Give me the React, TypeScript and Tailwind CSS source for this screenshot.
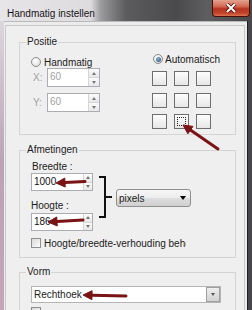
import React from 'react';

const Radio: React.FC<{ checked?: boolean }> = ({ checked }) => (
  <span className="flex h-[10px] w-[10px] shrink-0 items-center justify-center rounded-full border border-[#8a8c8e] bg-[radial-gradient(circle_at_40%_35%,#ffffff,#d6d7d8)]">
    {checked && <span className="h-[5px] w-[5px] rounded-full bg-[radial-gradient(circle_at_40%_35%,#8fb2d0,#1f4a70)]" />}
  </span>
);

const Check: React.FC = () => (
  <span className="h-[10px] w-[10px] shrink-0 border border-[#8e8f8f] bg-[linear-gradient(135deg,#d8d8d8,#fdfdfd)]" />
);

const Spin: React.FC<{ className: string }> = ({ className }) => (
  <div className={`flex flex-col border-l border-[#d6d6d6] ${className}`}>
    <div className="flex flex-1 items-center justify-center border-b border-[#d6d6d6] bg-[linear-gradient(#fbfbfb,#e8e8e8)]">
      <span className="h-0 w-0 border-x-[2px] border-b-[3px] border-x-transparent border-b-[#777]" />
    </div>
    <div className="flex flex-1 items-center justify-center bg-[linear-gradient(#fbfbfb,#e8e8e8)]">
      <span className="h-0 w-0 border-x-[2px] border-t-[3px] border-x-transparent border-t-[#777]" />
    </div>
  </div>
);

const Field: React.FC<{ value: string; disabled?: boolean; className: string; spin: string }> = ({
  value,
  disabled,
  className,
  spin,
}) => (
  <div className={`flex border border-[#abadb3] bg-white ${className}`}>
    <span className={`flex-1 pl-[2px] leading-[16px] ${disabled ? 'text-[#a2a2a2]' : 'text-[#111]'}`}>{value}</span>
    <Spin className={spin} />
  </div>
);

const Cell: React.FC<{ sel?: boolean }> = ({ sel }) => (
  <div className="flex h-[15px] w-[15px] border border-[#6e6e6e] bg-[linear-gradient(#fdfdfd,#e6e6e6)] p-[2px]">
    {sel && <div className="flex-1 border border-dotted border-[#222]" />}
  </div>
);

// annotation arrows: tail x/y, tip x/y
const arrows = [
  [218, 149, 183, 125],
  [85, 181.5, 56, 183],
  [83, 220, 48, 222],
  [126, 296, 83, 295],
];

const Arrow: React.FC<{ a: number[] }> = ({ a }) => {
  const [x1, y1, x2, y2] = a;
  const dx = x2 - x1;
  const dy = y2 - y1;
  const l = Math.hypot(dx, dy);
  const ux = dx / l;
  const uy = dy / l;
  const bx = x2 - ux * 9;
  const by = y2 - uy * 9;
  return (
    <g fill="#7a1414" stroke="#7a1414">
      <line x1={x1} y1={y1} x2={bx} y2={by} strokeWidth="3" strokeLinecap="round" />
      <polygon
        points={`${x2},${y2} ${bx - uy * 4.5},${by + ux * 4.5} ${bx + uy * 4.5},${by - ux * 4.5}`}
        strokeWidth="1"
        strokeLinejoin="round"
      />
    </g>
  );
};

export default function App() {
  return (
    <div className="relative flex h-[310px] w-[252px] flex-col overflow-hidden bg-[#ececec] font-['Liberation_Sans',Arial,sans-serif] text-[10px] text-[#1b1b1b]">
      {/* title bar */}
      <div className="flex h-[21px] shrink-0 justify-between bg-[linear-gradient(90deg,#e8e5e9_0%,#dedbdf_36%,#9b9a9c_40%,#5c5c5e_50%,#4a4a4c_70%,#5e5e60_82%,#48484a_100%)]">
        <span className="pl-[7px] pt-[8px] leading-[12px] text-[#151515]">Handmatig instellen</span>
        <div className="mr-[2px] flex h-[17px] w-[38px] items-center justify-center rounded-b-[4px] border border-t-0 border-[#4a1008] bg-[linear-gradient(#e4a391_0%,#d2654e_42%,#b5331f_55%,#c0432a_82%,#dc7350_100%)]">
          <svg width="12" height="10" viewBox="0 0 12 10">
            <path d="M2 1L10 9M10 1L2 9" stroke="#4a0e06" strokeWidth="3.6" />
            <path d="M2 1L10 9M10 1L2 9" stroke="#fff" strokeWidth="2" />
          </svg>
        </div>
      </div>

      <div className="flex flex-1">
        <div className="w-[4px] bg-[linear-gradient(#dcd7dd,#bba3b5_45%,#c6a6b7)]" />
        <div className="flex-1 border-t border-[#b9b9b9] pl-[1px] pr-[2px] pt-[3px]">
          <div className="h-full border border-b-0 border-[#c9c9c9] bg-[#efefef] pl-[13px] pr-[8px]">
            {/* Positie */}
            <fieldset className="mt-[10px] h-[99px] border border-[#d4d4d4]">
              <legend className="ml-[6px] px-[1px] leading-[12px]">Positie</legend>
              <div className="flex pl-[11px]">
                <div className="flex flex-col">
                  <label className="mt-[8px] flex h-[12px] items-center gap-[3px]">
                    <Radio />
                    Handmatig
                  </label>
                  <div className="flex h-[19px] items-center">
                    <span className="w-[16px] pl-[2px] text-[#a2a2a2]">X:</span>
                    <Field value="60" disabled className="h-[19px] w-[53px]" spin="w-[11px]" />
                  </div>
                  <div className="mt-[6px] flex h-[19px] items-center">
                    <span className="w-[16px] pl-[2px] text-[#a2a2a2]">Y:</span>
                    <Field value="60" disabled className="h-[19px] w-[53px]" spin="w-[11px]" />
                  </div>
                </div>
                <div className="ml-[52px] flex flex-col">
                  <label className="mt-[5px] flex h-[12px] items-center gap-[2px] pl-[1px]">
                    <Radio checked />
                    Automatisch
                  </label>
                  <div className="mt-[6px] grid grid-cols-[15px_15px_15px] gap-x-[7px] gap-y-[6.5px]">
                    <Cell />
                    <Cell />
                    <Cell />
                    <Cell />
                    <Cell />
                    <Cell />
                    <Cell />
                    <Cell sel />
                    <Cell />
                  </div>
                </div>
              </div>
            </fieldset>

            {/* Afmetingen */}
            <fieldset className="mt-[9px] h-[114px] border border-[#d4d4d4]">
              <legend className="ml-[6px] px-[1px] leading-[12px]">Afmetingen</legend>
              <div className="flex pl-[11px]">
                <div className="flex w-[62px] flex-col">
                  <span className="mt-[5px] pl-[1px] leading-[12px]">Breedte :</span>
                  <Field value="1000" className="h-[18px] w-[62px]" spin="w-[9px]" />
                  <span className="mt-[9px] leading-[12px]">Hoogte :</span>
                  <Field value="186" className="mt-[1px] h-[18px] w-[62px]" spin="w-[9px]" />
                </div>
                <svg width="23" height="44" className="mt-[19px] shrink-0">
                  <path d="M6 2H12V42H6M12 22H19" fill="none" stroke="#111" strokeWidth="2" />
                </svg>
                <div className="mt-[33px] flex h-[18px] w-[75px] items-center justify-between rounded-[3px] border border-[#8e8f8f] bg-[linear-gradient(#f6f6f6_0%,#ececec_50%,#dedede_51%,#d0d0d0_100%)] pl-[2px] pr-[4px]">
                  <span>pixels</span>
                  <span className="h-0 w-0 border-x-[3px] border-t-[4px] border-x-transparent border-t-black" />
                </div>
              </div>
              <label className="ml-[11px] mt-[6px] flex h-[12px] items-center gap-[3px]">
                <Check />
                <span className="w-[142px] overflow-hidden whitespace-nowrap">Hoogte/breedte-verhouding behouden</span>
              </label>
            </fieldset>

            {/* Vorm */}
            <fieldset className="mt-[8px] h-[70px] border border-[#d4d4d4]">
              <legend className="ml-[6px] px-[1px] leading-[12px]">Vorm</legend>
              <div className="ml-[11px] mt-[8px] flex h-[17px] w-[190px] border border-[#b5b5b5] bg-white">
                <span className="flex-1 pl-[2px] leading-[15px]">Rechthoek</span>
                <div className="flex w-[14px] items-center justify-center border border-[#a0a0a0] bg-[linear-gradient(#eeeeee,#d2d2d2)]">
                  <span className="h-0 w-0 border-x-[2px] border-t-[3px] border-x-transparent border-t-[#555]" />
                </div>
              </div>
              <div className="ml-[11px] mt-[4px] flex">
                <Check />
              </div>
            </fieldset>
          </div>
        </div>
        <div className="w-[5px] border-l border-[#1e1e1e] bg-[#46464c]" />
      </div>

      <svg className="pointer-events-none absolute inset-0" width="252" height="310" viewBox="0 0 252 310">
        {arrows.map((a, i) => (
          <Arrow key={i} a={a} />
        ))}
      </svg>
    </div>
  );
}
